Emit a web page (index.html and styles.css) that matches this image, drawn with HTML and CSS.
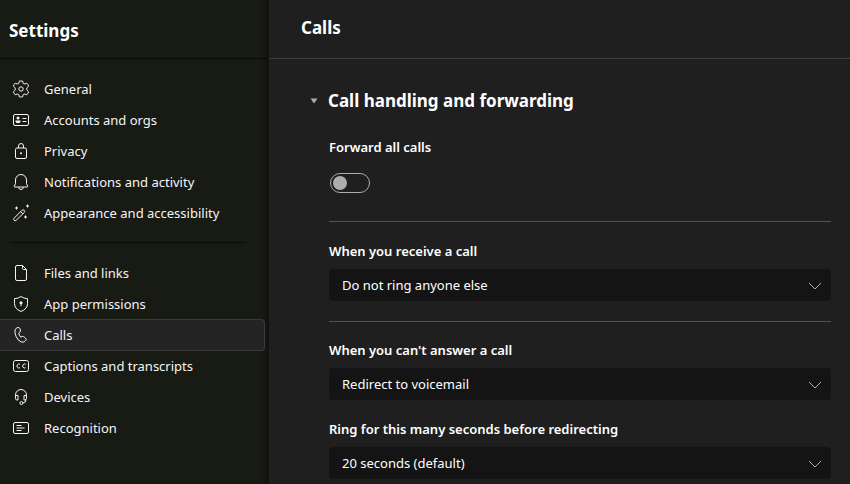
FILE: index.html
```html
<!DOCTYPE html>
<html lang="en">
<head>
  <meta charset="UTF-8">
  <meta name="viewport" content="width=device-width, initial-scale=1.0">
  <title>Settings</title>
  <link rel="stylesheet" href="styles.css">
</head>
<body>
  <div class="app">
    <aside class="sidebar">
      <h1 class="sidebar-title">Settings</h1>
      <nav class="nav">
        <a class="nav-item" href="#general">
          <svg class="icon" viewBox="0 0 20 20"><circle cx="10" cy="10" r="2.2"/><path d="M8.3 2.2Q10 1.7 11.7 2.2L12.1 4.2Q12.7 5.2 13.9 4.9L15.8 4.2Q17.1 5.5 17.6 7.2L16.1 8.6Q15.2 10 16.1 11.4L17.6 12.8Q17.1 14.5 15.8 15.8L13.9 15.1Q12.7 14.8 12.1 15.8L11.7 17.8Q10 18.3 8.3 17.8L7.9 15.8Q7.3 14.8 6.1 15.1L4.2 15.8Q2.9 14.5 2.4 12.8L3.9 11.4Q4.8 10 3.9 8.6L2.4 7.2Q2.9 5.5 4.2 4.2L6.1 4.9Q7.3 5.2 7.9 4.2Z"/></svg>
          General
        </a>
        <a class="nav-item" href="#accounts">
          <svg class="icon" viewBox="0 0 20 20"><rect x="2.5" y="4.5" width="15" height="11" rx="1.5"/><path d="M11.5 8.5h4M11.5 11.5h4"/><circle class="fill" cx="7" cy="8" r="1.5"/><path class="fill" d="M4.5 10.5h5v.8q0 2-2.5 2t-2.5-2z"/></svg>
          Accounts and orgs
        </a>
        <a class="nav-item" href="#privacy">
          <svg class="icon" viewBox="0 0 20 20"><rect x="4.5" y="7" width="11" height="10.5" rx="1.5"/><path d="M7.500 7V5a2.500 2.500 0 0 1 5 0v2"/><circle class="fill" cx="10" cy="12.300" r="1"/></svg>
          Privacy
        </a>
        <a class="nav-item" href="#notifications">
          <svg class="icon" viewBox="0 0 20 20"><path d="M10 2.500a5.500 5.500 0 0 0-5.500 5.500v3.500L3.300 14.200q-.2.800.5.800h12.400q.7 0 .5-.8L15.500 11.500V8A5.500 5.500 0 0 0 10 2.500z"/><path d="M7.700 15.200a2.300 2.300 0 0 0 4.600 0"/></svg>
          Notifications and activity
        </a>
        <a class="nav-item" href="#appearance">
          <svg class="icon" viewBox="0 0 20 20"><path d="M3 15.300 11 7.300a1.500 1.500 0 0 1 2.200 2.200L5.100 17.400A1.500 1.500 0 0 1 3 15.300zM9.700 8.700l2.100 2.100"/><path d="M16.500 1.500v3M15 3h3M5.500 3.500v3M4 5h3M14.500 12.500v3M13 14h3"/></svg>
          Appearance and accessibility
        </a>
        <hr class="nav-divider">
        <a class="nav-item" href="#files">
          <svg class="icon" viewBox="0 0 20 20"><path d="M6 2.500h5.500l4 4V16a1.500 1.500 0 0 1-1.500 1.500H6A1.500 1.500 0 0 1 4.500 16V4A1.500 1.500 0 0 1 6 2.500z"/><path d="M11.500 2.500V5.500q0 1 1 1h3"/></svg>
          Files and links
        </a>
        <a class="nav-item" href="#permissions">
          <svg class="icon" viewBox="0 0 20 20"><path d="M10 2.500Q12.800 4.500 16.500 4.700V9.500Q16.500 15 10 17.500 3.500 15 3.500 9.500V4.700Q7.200 4.500 10 2.500z"/><circle class="fill" cx="10" cy="8.700" r="1.500"/><path d="M10 9v3.300"/></svg>
          App permissions
        </a>
        <a class="nav-item active" href="#calls" aria-current="page">
          <svg class="icon" viewBox="0 0 20 20"><path d="M6.100 2.800 7 2.500Q8.200 2.200 8.700 3.300L9.400 5Q9.800 6.100 9 6.900L7.700 8.100Q8.100 10.100 9.700 12L11.500 11.500Q12.600 11.200 13.300 12.100L14.900 13.600Q15.600 14.600 14.700 15.500L13.900 16.300Q12.300 17.700 10.100 16.900 7.200 15.900 5.200 11.700 3.300 7.400 4.100 4.900 4.600 3.200 6.100 2.800z"/></svg>
          Calls
        </a>
        <a class="nav-item" href="#captions">
          <svg class="icon" viewBox="0 0 20 20"><rect x="2.5" y="4.5" width="15" height="11" rx="2"/><path d="M9 8.300A2 2 0 1 0 9 11.700M14.700 8.300A2 2 0 1 0 14.700 11.700"/></svg>
          Captions and transcripts
        </a>
        <a class="nav-item" href="#devices">
          <svg class="icon" viewBox="0 0 20 20"><path d="M4.500 8.500V8a5.500 5.500 0 0 1 11 0v.5"/><path d="M4.500 8.500H7v4.500H6A1.500 1.500 0 0 1 4.500 11.500zM15.500 8.500H13v4.500h1a1.500 1.500 0 0 0 1.500-1.500zM15 12.700q0 3-3 3.300"/><circle cx="10.400" cy="16" r="1.500"/></svg>
          Devices
        </a>
        <a class="nav-item" href="#recognition">
          <svg class="icon" viewBox="0 0 20 20"><rect x="2.5" y="4.5" width="15" height="11" rx="1.5"/><path d="M5.500 7.500h5M5.500 10h8M5.500 12.500h5"/></svg>
          Recognition
        </a>
      </nav>
    </aside>

    <main class="main">
      <header class="main-header">
        <h2>Calls</h2>
      </header>
      <section class="content">
        <h3 class="section-title">
          <svg class="caret" viewBox="0 0 8 6"><path d="M.5.500h7L4 5.500z"/></svg>
          Call handling and forwarding
        </h3>

        <div class="group">
          <label class="label" for="forward">Forward all calls</label>
          <input class="toggle" type="checkbox" role="switch" id="forward">
        </div>

        <div class="group">
          <label class="label" for="receive">When you receive a call</label>
          <div class="dropdown">
            <select id="receive">
              <option>Do not ring anyone else</option>
            </select>
            <svg class="chevron" viewBox="0 0 14 8"><path d="M1 1l6 6 6-6"/></svg>
          </div>
        </div>

        <div class="group">
          <label class="label" for="unanswered">When you can't answer a call</label>
          <div class="dropdown">
            <select id="unanswered">
              <option>Redirect to voicemail</option>
            </select>
            <svg class="chevron" viewBox="0 0 14 8"><path d="M1 1l6 6 6-6"/></svg>
          </div>
          <label class="label" for="seconds">Ring for this many seconds before redirecting</label>
          <div class="dropdown">
            <select id="seconds">
              <option>20 seconds (default)</option>
            </select>
            <svg class="chevron" viewBox="0 0 14 8"><path d="M1 1l6 6 6-6"/></svg>
          </div>
        </div>
      </section>
    </main>
  </div>
</body>
</html>
```
FILE: styles.css
```css
* {
  box-sizing: border-box;
}

body {
  margin: 0;
  background: #1f1f1f;
  color: #fff;
  font-family: "Noto Sans", "Open Sans", sans-serif;
  font-size: 13px;
  line-height: 20px;
}

h1, h2, h3 {
  margin: 0;
  font-weight: 700;
}

.app {
  display: flex;
  height: 100vh;
  overflow: hidden;
}

/* Sidebar */
.sidebar {
  flex: 0 0 269px;
  background: linear-gradient(to left, #11120e, #181a14 8px);
}

.sidebar-title {
  height: 59px;
  padding: 19px 9px 0;
  border-bottom: 1px solid #0a0a08;
  font-size: 17px;
  line-height: 24px;
}

.nav {
  display: flex;
  flex-direction: column;
  padding: 14px 4px 0 0;
}

.nav-item {
  display: flex;
  align-items: center;
  gap: 13px;
  height: 32px;
  margin-bottom: -1px;
  padding-left: 11px;
  border: 1px solid transparent;
  border-left: 0;
  border-radius: 0 4px 4px 0;
  color: #f5f5f5;
  text-decoration: none;
}

.nav-item.active {
  background: #242424;
  border-color: #3a3a38;
}

.nav-divider {
  width: 236px;
  margin: 14px 10px;
  border: 0;
  border-top: 1px solid #0a0a08;
}

.icon {
  width: 20px;
  height: 20px;
  fill: none;
  stroke: #f5f5f5;
  stroke-linejoin: round;
}

.icon .fill {
  fill: #f5f5f5;
  stroke: none;
}

/* Main panel */
.main {
  flex: 1;
  min-width: 0;
}

.main-header {
  height: 59px;
  padding: 16px 32px 0;
  border-bottom: 1px solid #3d3d3d;
}

.main-header h2 {
  font-size: 17px;
  line-height: 24px;
}

.content {
  padding: 30px 19px 0 60px;
}

.section-title {
  display: flex;
  align-items: center;
  margin-left: -19px;
  gap: 10px;
  font-size: 17px;
  line-height: 24px;
}

.caret {
  width: 8px;
  height: 6px;
  fill: #adadad;
}

.group {
  display: flex;
  flex-direction: column;
  padding: 19px 0 20px;
}

.group + .group {
  border-top: 1px solid #525252;
}

.group:last-child {
  padding-top: 18px;
}

.section-title + .group {
  padding: 24px 0 28px;
}

.label {
  margin-bottom: 8px;
  font-weight: 600;
}

.toggle {
  appearance: none;
  display: flex;
  align-items: center;
  width: 40px;
  height: 20px;
  margin: 8px 1px 0;
  padding-left: 2px;
  border: 1px solid #adadad;
  border-radius: 10px;
}

.toggle::before {
  content: "";
  width: 14px;
  height: 14px;
  border-radius: 50%;
  background: #adadad;
}

.toggle:checked {
  justify-content: flex-end;
  padding: 0 2px 0 0;
}

.dropdown {
  position: relative;
}

.dropdown + .label {
  margin-top: 19px;
}

.dropdown select {
  appearance: none;
  display: block;
  width: 100%;
  height: 32px;
  padding: 0 40px 0 13px;
  border: 0;
  border-radius: 4px;
  background: #141414;
  color: #fff;
  font: inherit;
}

.chevron {
  position: absolute;
  top: 13px;
  right: 9px;
  width: 14px;
  height: 8px;
  fill: none;
  stroke: #adadad;
  pointer-events: none;
}
```
